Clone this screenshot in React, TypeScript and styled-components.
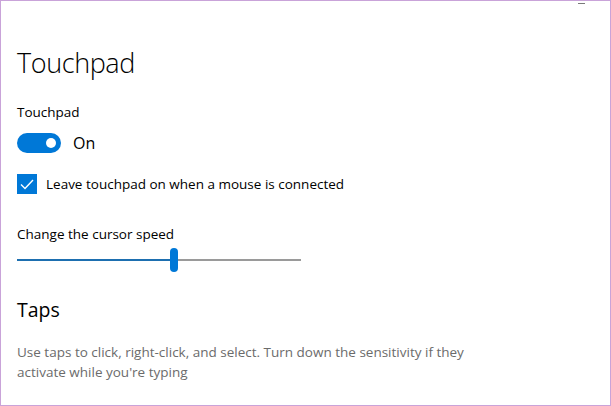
import styled, { createGlobalStyle } from 'styled-components';

const GlobalStyle = createGlobalStyle`
  html, body {
    margin: 0;
    padding: 0;
    background: #ffffff;
  }
  body {
    font-family: "Open Sans", "Noto Sans", sans-serif;
    color: #000000;
  }
`;

const Window = styled.div`
  width: 611px;
  height: 406px;
  box-sizing: border-box;
  border: 1px solid #c9a3d9;
  background: #ffffff;
  display: flex;
  flex-direction: column;
  overflow: hidden;
`;

const TitleBar = styled.div`
  height: 8px;
  display: flex;
  justify-content: flex-end;
  align-items: flex-start;
  padding: 2px 25px 0 0;
`;

const MinimizeDash = styled.span`
  width: 7px;
  height: 1px;
  background: #7a7a7a;
`;

const Content = styled.div`
  display: flex;
  flex-direction: column;
  padding: 0 16px;
`;

const PageTitle = styled.h1`
  margin: 32px 0 0;
  font-size: 27px;
  font-weight: 300;
  line-height: 40px;
  letter-spacing: -0.4px;
`;

const Label = styled.div<{ $top: number }>`
  margin-top: ${({ $top }) => $top}px;
  font-size: 13.5px;
  line-height: 20px;
`;

const ToggleRow = styled.div`
  display: flex;
  align-items: center;
  gap: 12px;
  margin-top: 10px;
`;

const Toggle = styled.div<{ $on: boolean }>`
  width: 44px;
  height: 20px;
  box-sizing: border-box;
  border-radius: 10px;
  background: ${({ $on }) => ($on ? '#0078d7' : '#ffffff')};
  display: flex;
  align-items: center;
  justify-content: ${({ $on }) => ($on ? 'flex-end' : 'flex-start')};
  padding: 0 5px;
`;

const Knob = styled.span`
  width: 10px;
  height: 10px;
  border-radius: 50%;
  background: #ffffff;
`;

const CheckRow = styled.label`
  display: flex;
  align-items: center;
  gap: 9px;
  margin-top: 20px;
  font-size: 13.5px;
`;

const CheckBox = styled.span`
  width: 20px;
  height: 20px;
  background: #0078d7;
  display: flex;
  align-items: center;
  justify-content: center;
`;

const Slider = styled.div`
  width: 284px;
  height: 24px;
  margin-top: 4px;
  display: flex;
  align-items: center;
`;

const TrackFill = styled.div`
  height: 2px;
  background: #1d6fb0;
`;

const TrackRest = styled.div`
  flex: 1;
  height: 2px;
  background: #9a9a9a;
`;

const Thumb = styled.div`
  width: 8px;
  height: 24px;
  border-radius: 4px;
  background: #0078d7;
`;

const SectionTitle = styled.h2`
  margin: 24px 0 0;
  font-size: 19.5px;
  font-weight: 400;
  line-height: 28px;
`;

const Description = styled.p`
  margin: 18px 0 0;
  width: 460px;
  font-size: 13.5px;
  line-height: 20px;
  color: #6b6b6b;
`;

export default function App() {
  const speed = 0.54;
  return (
    <>
      <GlobalStyle />
      <Window>
        <TitleBar>
          <MinimizeDash />
        </TitleBar>
        <Content>
          <PageTitle>Touchpad</PageTitle>
          <Label $top={19}>Touchpad</Label>
          <ToggleRow>
            <Toggle $on>
              <Knob />
            </Toggle>
            <span>On</span>
          </ToggleRow>
          <CheckRow>
            <CheckBox>
              <svg width="14" height="11" viewBox="0 0 14 11">
                <path d="M1 5.5 L5 9.5 L13 1" fill="none" stroke="#ffffff" strokeWidth="1.4" />
              </svg>
            </CheckBox>
            Leave touchpad on when a mouse is connected
          </CheckRow>
          <Label $top={30}>Change the cursor speed</Label>
          <Slider>
            <TrackFill style={{ width: `${speed * 100}%` }} />
            <Thumb />
            <TrackRest />
          </Slider>
          <SectionTitle>Taps</SectionTitle>
          <Description>
            Use taps to click, right-click, and select. Turn down the sensitivity if they activate while you're typing
          </Description>
        </Content>
      </Window>
    </>
  );
}
